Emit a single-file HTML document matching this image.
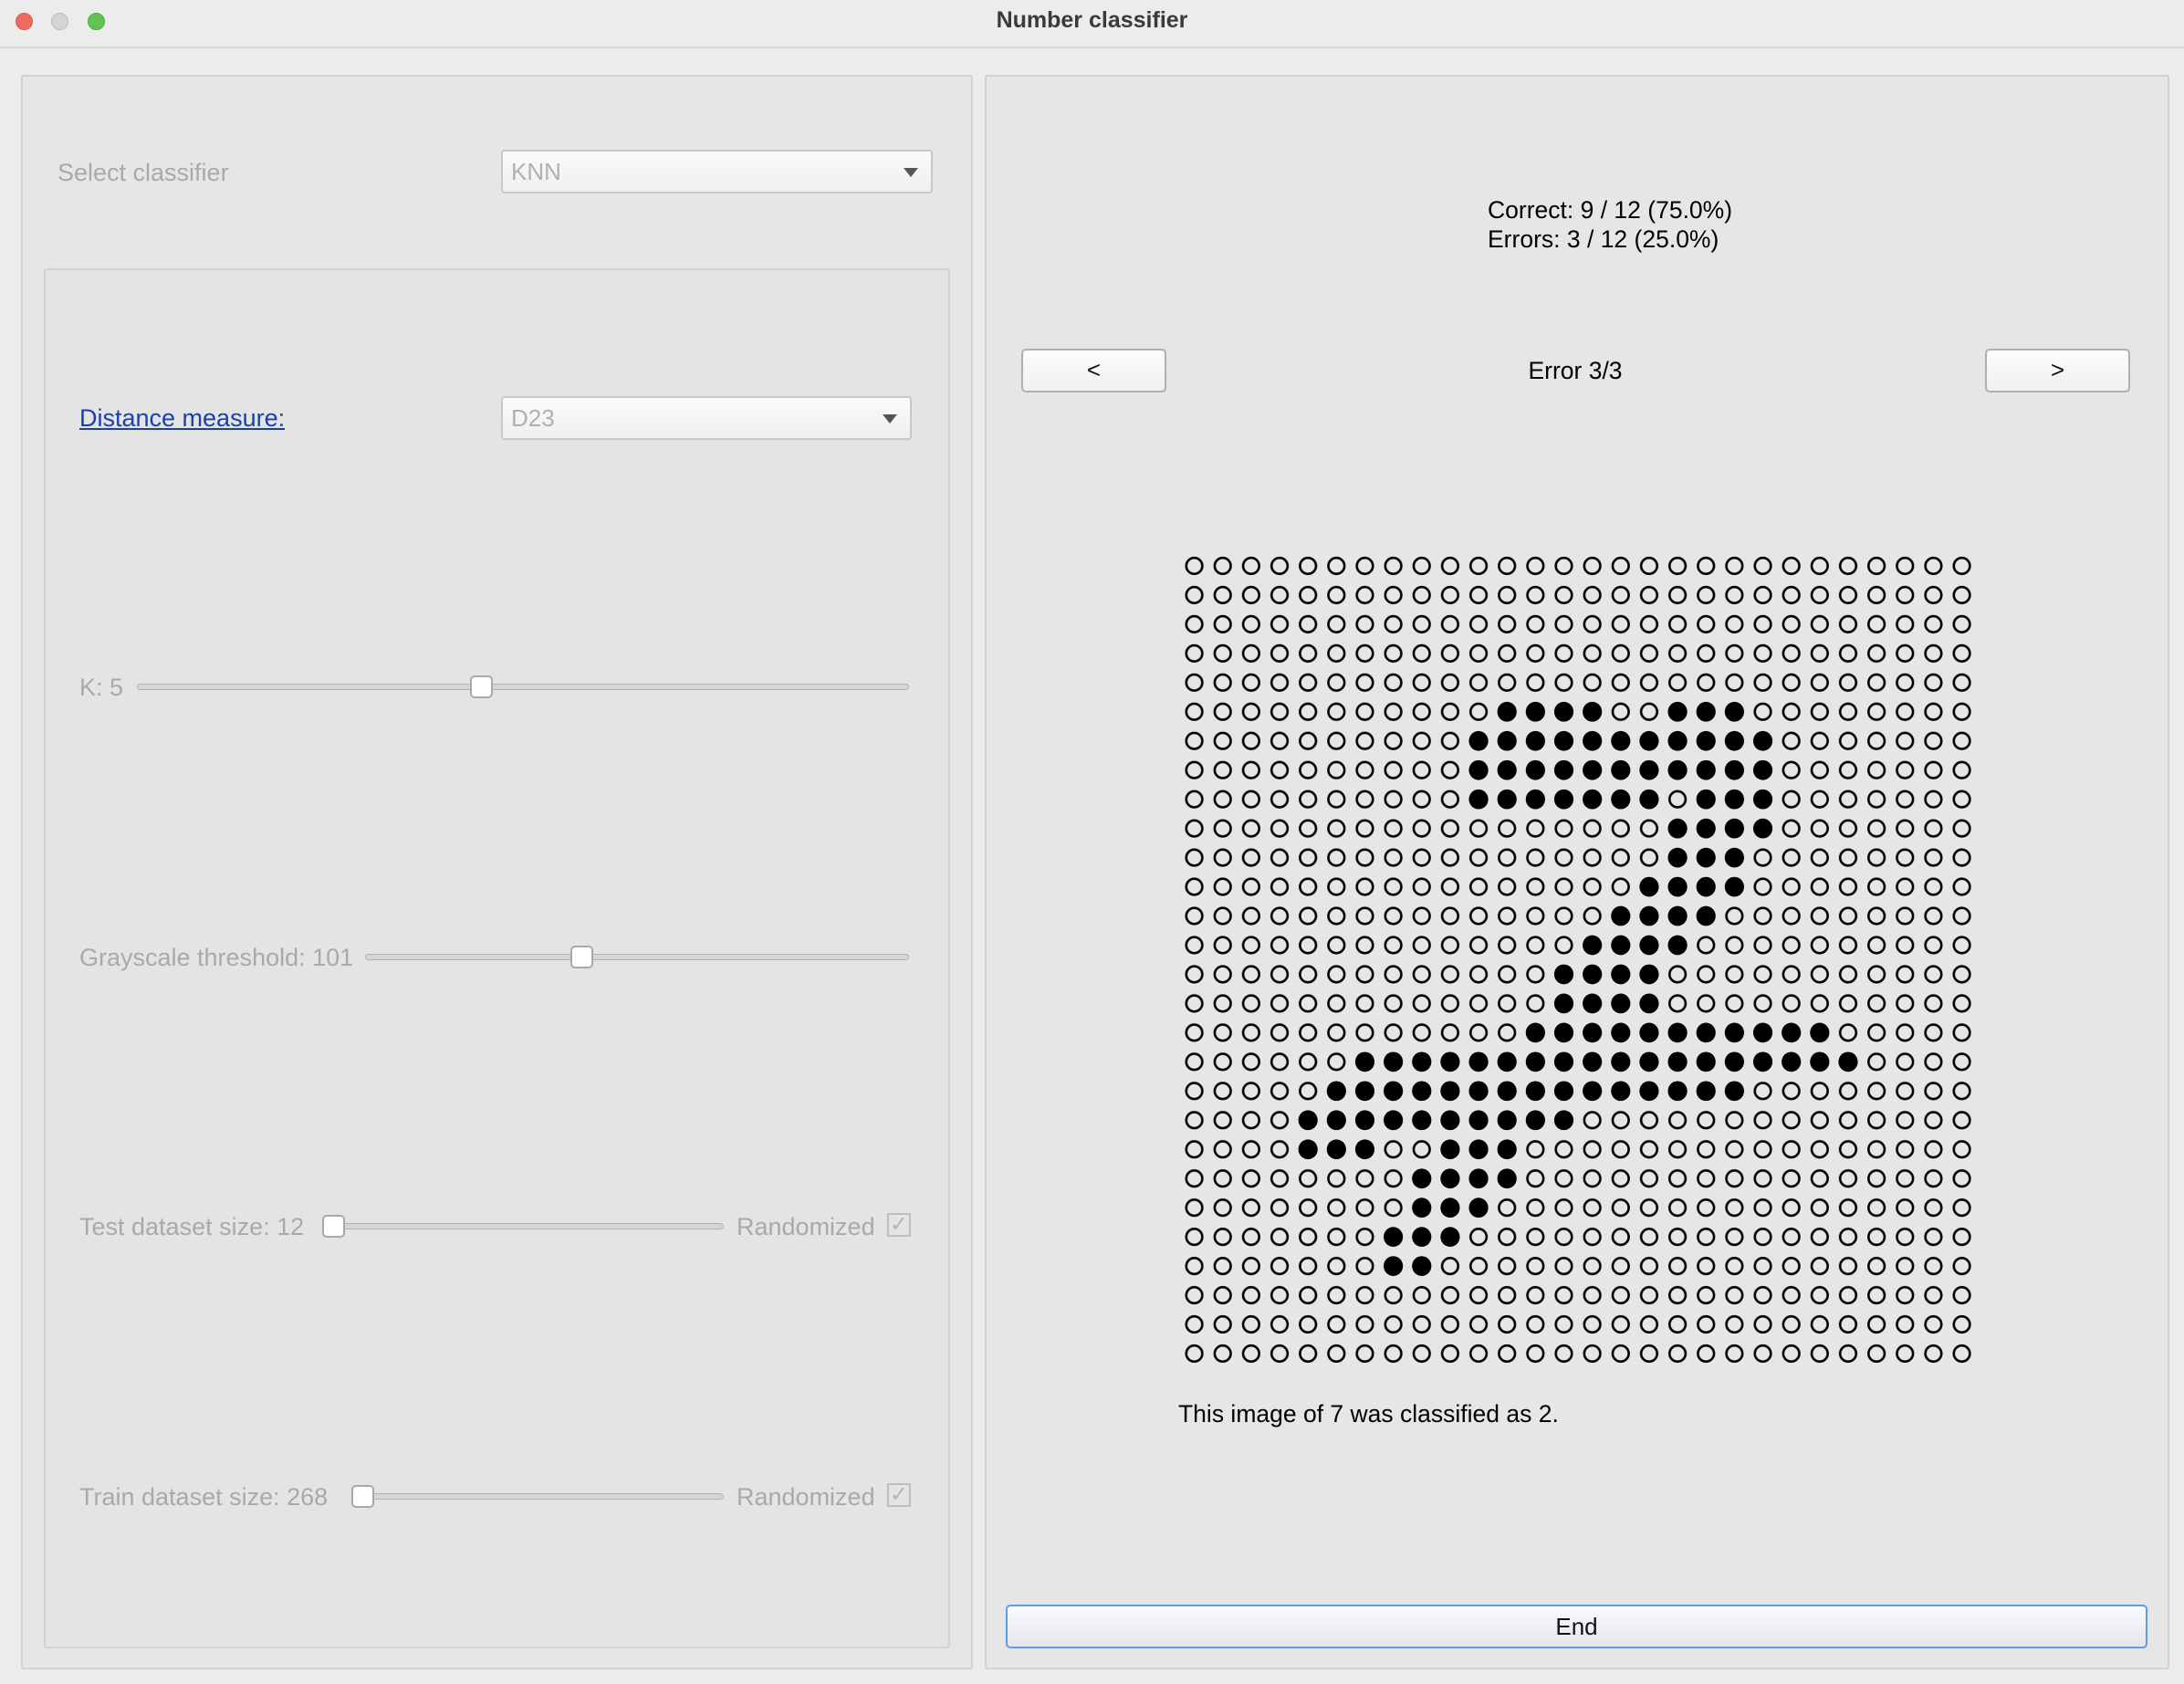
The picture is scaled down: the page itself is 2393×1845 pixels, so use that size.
<!DOCTYPE html>
<html><head><meta charset="utf-8"><style>
*{margin:0;padding:0;box-sizing:border-box}
body{width:2393px;height:1845px;background:#ececec;font-family:"Liberation Sans",sans-serif;position:relative;overflow:hidden}
.a{position:absolute}
.title{left:0;top:0;width:2393px;height:53px;background:#ececec;border-bottom:2px solid #d6d6d6}
.tl{top:14px;width:19px;height:19px;border-radius:50%}
.panel{background:#e6e6e6;border:2px solid #d2d2d2;border-radius:3px}
.g{color:#a9a9a9;font-size:27px;line-height:30px}
.combo{background:linear-gradient(#fbfbfb,#efefef);border:2px solid #c8c8c8;border-radius:4px}
.combo span{position:absolute;left:9px;top:7px;font-size:26px;color:#b0b0b0}
.combo i{position:absolute;right:14px;top:18px;width:0;height:0;border-left:8px solid transparent;border-right:8px solid transparent;border-top:10px solid #555}
.track{height:7px;background:#d6d6d6;border:1px solid #b3b3b3;border-radius:4px}
.handle{width:25px;height:25px;background:#fff;border:2px solid #a9a9a9;border-radius:5px}
.cb{width:26px;height:26px;border:2px solid #bdbdbd;color:#b5b5b5;font-size:24px;line-height:22px;text-align:center}
.btn{background:linear-gradient(#fdfdfd,#f0f0f0);border:2px solid #b0b0b0;border-radius:5px;text-align:center;font-size:26px;line-height:42px;color:#111}
.t{font-size:26.5px;line-height:32px;color:#000}
</style></head><body>
<div class="a title"></div>
<div class="a tl" style="left:17px;background:#ee6a5f;border:1px solid #d65a4f"></div>
<div class="a tl" style="left:56px;background:#d4d4d4;border:1px solid #bcbcbc"></div>
<div class="a tl" style="left:96px;background:#60c454;border:1px solid #4fa845"></div>
<div class="a" style="left:0;width:2393px;top:8px;text-align:center;font-weight:bold;font-size:25px;color:#3a3a3a">Number classifier</div>

<div class="a panel" style="left:23px;top:82px;width:1043px;height:1747px"></div>
<div class="a panel" style="left:1079px;top:82px;width:1298px;height:1747px"></div>
<div class="a panel" style="left:48px;top:294px;width:993px;height:1512px;background:#e4e4e4"></div>

<div class="a g" style="left:63px;top:174px">Select classifier</div>
<div class="a combo" style="left:549px;top:164px;width:473px;height:48px"><span>KNN</span><i></i></div>

<div class="a" style="left:87px;top:443px;font-size:27px;line-height:30px;color:#1a3fb0;text-decoration:underline">Distance measure:</div>
<div class="a combo" style="left:549px;top:434px;width:450px;height:48px"><span>D23</span><i></i></div>

<div class="a g" style="left:87px;top:738px">K: 5</div>
<div class="a track" style="left:150px;top:749px;width:846px"></div>
<div class="a handle" style="left:515px;top:740px"></div>

<div class="a g" style="left:87px;top:1034px">Grayscale threshold: 101</div>
<div class="a track" style="left:400px;top:1045px;width:596px"></div>
<div class="a handle" style="left:625px;top:1036px"></div>

<div class="a g" style="left:87px;top:1329px">Test dataset size: 12</div>
<div class="a track" style="left:353px;top:1340px;width:440px"></div>
<div class="a handle" style="left:353px;top:1331px"></div>
<div class="a g" style="left:807px;top:1329px">Randomized</div>
<div class="a cb" style="left:972px;top:1329px">✓</div>

<div class="a g" style="left:87px;top:1625px">Train dataset size: 268</div>
<div class="a track" style="left:385px;top:1636px;width:408px"></div>
<div class="a handle" style="left:385px;top:1627px"></div>
<div class="a g" style="left:807px;top:1625px">Randomized</div>
<div class="a cb" style="left:972px;top:1625px">✓</div>

<div class="a t" style="left:1630px;top:214px">Correct: 9 / 12 (75.0%)</div>
<div class="a t" style="left:1630px;top:246px">Errors: 3 / 12 (25.0%)</div>

<div class="a btn" style="left:1119px;top:382px;width:159px;height:48px">&lt;</div>
<div class="a btn" style="left:2175px;top:382px;width:159px;height:48px">&gt;</div>
<div class="a t" style="left:1526px;width:400px;top:390px;text-align:center">Error 3/3</div>

<svg class="a" style="left:1293px;top:604px" width="873" height="896" viewBox="0 0 873 896">
<defs><pattern id="p" patternUnits="userSpaceOnUse" width="31.148" height="31.963"><circle cx="15.57" cy="15.98" r="8.8" fill="none" stroke="#000" stroke-width="2.6"/></pattern></defs>
<rect width="872.2" height="895" fill="url(#p)"/>
<g transform="scale(31.148,31.963)" stroke="#000" stroke-width="0.68" stroke-linecap="round" stroke-dasharray="0 1" fill="none">
<line x1="11.5" x2="14.6" y1="5.5" y2="5.5"/><line x1="17.5" x2="19.6" y1="5.5" y2="5.5"/>
<line x1="10.5" x2="20.6" y1="6.5" y2="6.5"/>
<line x1="10.5" x2="20.6" y1="7.5" y2="7.5"/>
<line x1="10.5" x2="16.6" y1="8.5" y2="8.5"/><line x1="18.5" x2="20.6" y1="8.5" y2="8.5"/>
<line x1="17.5" x2="20.6" y1="9.5" y2="9.5"/>
<line x1="17.5" x2="19.6" y1="10.5" y2="10.5"/>
<line x1="16.5" x2="19.6" y1="11.5" y2="11.5"/>
<line x1="15.5" x2="18.6" y1="12.5" y2="12.5"/>
<line x1="14.5" x2="17.6" y1="13.5" y2="13.5"/>
<line x1="13.5" x2="16.6" y1="14.5" y2="14.5"/>
<line x1="13.5" x2="16.6" y1="15.5" y2="15.5"/>
<line x1="12.5" x2="22.6" y1="16.5" y2="16.5"/>
<line x1="6.5" x2="23.6" y1="17.5" y2="17.5"/>
<line x1="5.5" x2="19.6" y1="18.5" y2="18.5"/>
<line x1="4.5" x2="13.6" y1="19.5" y2="19.5"/>
<line x1="4.5" x2="6.6" y1="20.5" y2="20.5"/><line x1="9.5" x2="11.6" y1="20.5" y2="20.5"/>
<line x1="8.5" x2="11.6" y1="21.5" y2="21.5"/>
<line x1="8.5" x2="10.6" y1="22.5" y2="22.5"/>
<line x1="7.5" x2="9.6" y1="23.5" y2="23.5"/>
<line x1="7.5" x2="8.6" y1="24.5" y2="24.5"/>
</g></svg>

<div class="a t" style="left:1291px;top:1533px">This image of 7 was classified as 2.</div>

<div class="a btn" style="left:1102px;top:1758px;width:1251px;height:48px;border:2px solid #5b9ee6;background:linear-gradient(#fafbfd,#e3e6ec);line-height:44px">End</div>
</body></html>
